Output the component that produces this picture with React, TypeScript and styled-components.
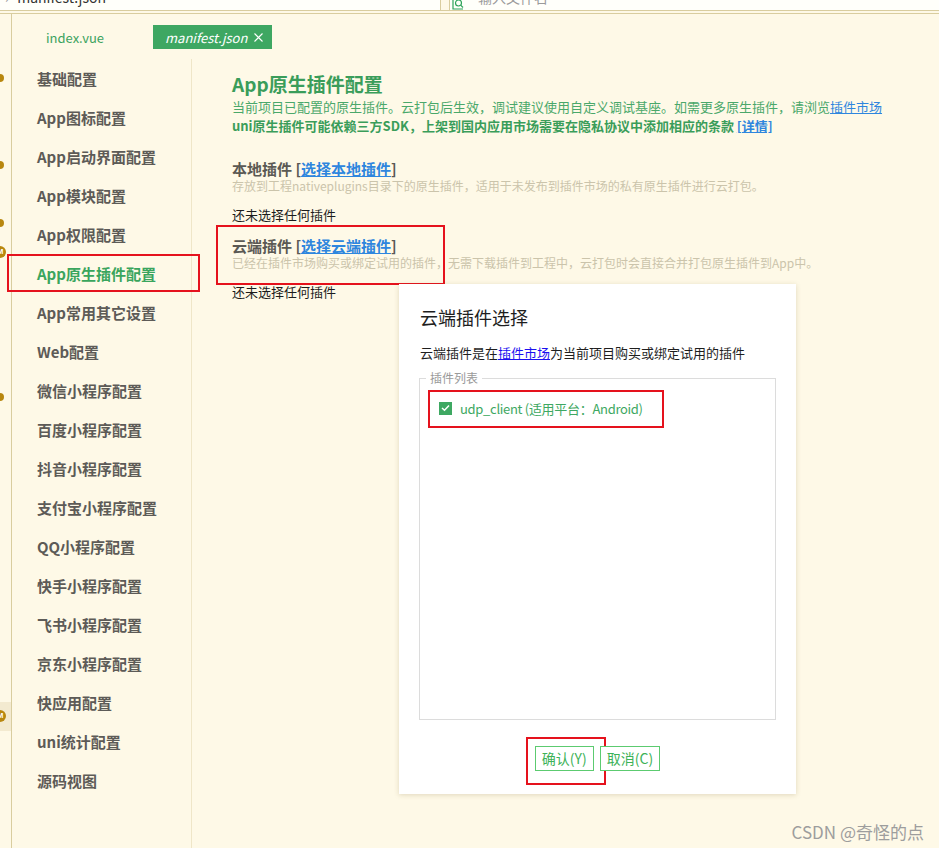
import React from 'react';
import styled, { createGlobalStyle, css } from 'styled-components';

const GlobalStyle = createGlobalStyle`
  html, body { margin: 0; padding: 0; }
  body {
    background: #fef9e7;
    font-family: "Noto Sans CJK SC", "Microsoft YaHei", sans-serif;
  }
  #root { width: 939px; height: 848px; overflow: hidden; }
`;

const RED = '#e5121d';
const TAN = '#d9cd9f';

const annotate = css<{ $l: number; $t: number; $w: number; $h: number }>`
  &::after {
    content: '';
    position: absolute;
    left: ${(p) => p.$l}px;
    top: ${(p) => p.$t}px;
    width: ${(p) => p.$w}px;
    height: ${(p) => p.$h}px;
    border: 2px solid ${RED};
    box-sizing: border-box;
    pointer-events: none;
  }
`;

const Page = styled.div`
  position: relative;
  width: 939px;
  height: 848px;
  display: flex;
  flex-direction: column;
  overflow: hidden;
`;

const TopStrip = styled.div`
  height: 10px;
  display: flex;
  border-bottom: 1px solid ${TAN};
  margin-bottom: 2px;
`;

const PathBox = styled.div`
  width: 441px;
  box-sizing: border-box;
  background: #fffffa;
  border-right: 1px solid ${TAN};
  display: flex;
  align-items: flex-start;
  gap: 8px;
  padding-left: 5px;
  overflow: hidden;
`;

const TopText = styled.span<{ $muted?: boolean }>`
  font-size: 14px;
  line-height: 20px;
  margin-top: -13px;
  color: ${(p) => (p.$muted ? '#9a9a9a' : '#333')};
  white-space: nowrap;
`;

const SearchBox = styled.div`
  flex: 1;
  margin-left: 8px;
  background: #fffffa;
  border-left: 1px solid ${TAN};
  display: flex;
  align-items: flex-start;
  gap: 14px;
  padding-left: 2px;
  overflow: hidden;
`;

const Body = styled.div`
  flex: 1;
  display: flex;
  border-top: 1px solid ${TAN};
  min-height: 0;
`;

const Gutter = styled.div`
  position: relative;
  width: 11px;
  border-right: 1px solid ${TAN};
  flex: none;
`;

const Marker = styled.span<{ $top: number }>`
  position: absolute;
  left: -4px;
  top: ${(p) => p.$top}px;
  width: 8px;
  height: 8px;
  border-radius: 50%;
  background: #b8870f;
`;

const Badge = styled.span<{ $top: number }>`
  position: absolute;
  left: -6px;
  top: ${(p) => p.$top}px;
  width: 12px;
  height: 12px;
  border-radius: 50%;
  background: #b8870f;
  color: #fff;
  font-size: 8px;
  line-height: 12px;
  text-align: center;
  font-family: "Liberation Sans", sans-serif;
  font-weight: bold;
`;

const GutterHighlight = styled.span<{ $top: number }>`
  position: absolute;
  left: 0;
  right: 0;
  top: ${(p) => p.$top}px;
  height: 29px;
  background: #f3ead0;
`;

const Editor = styled.div`
  flex: 1;
  display: flex;
  flex-direction: column;
  min-width: 0;
`;

const TabBar = styled.div`
  height: 46px;
  display: flex;
  align-items: center;
  gap: 49px;
  padding-left: 34px;
  flex: none;
`;

const Tab = styled.div<{ $active?: boolean }>`
  display: flex;
  align-items: center;
  gap: 7px;
  font-size: 13px;
  height: 24px;
  color: #3ca35f;
  ${(p) =>
    p.$active &&
    css`
      background: #3ea762;
      color: #fff;
      font-style: italic;
      padding: 0 9px 0 12px;
    `}
`;

const Content = styled.div`
  flex: 1;
  display: flex;
  min-height: 0;
`;

const Sidebar = styled.nav`
  width: 179px;
  border-right: 1px solid #efe6c8;
  flex: none;
  display: flex;
  flex-direction: column;
  margin-top: -1px;
`;

const NavItem = styled.div<{ $active?: boolean; $l: number; $t: number; $w: number; $h: number }>`
  position: relative;
  height: 39px;
  line-height: 39px;
  padding-left: 25px;
  font-size: 15px;
  font-weight: bold;
  color: ${(p) => (p.$active ? '#3aa55d' : '#5d5b57')};
  white-space: nowrap;
  ${(p) => p.$active && annotate}
`;

const Main = styled.main`
  flex: 1;
  padding: 11px 0 0 40px;
  min-width: 0;
`;

const Title = styled.h1`
  margin: 0;
  font-size: 19px;
  line-height: 26px;
  font-weight: bold;
  color: #3a9d5a;
`;

const Note = styled.div<{ $bold?: boolean }>`
  font-size: 13px;
  line-height: 19px;
  color: ${(p) => (p.$bold ? '#3a9d5a' : '#4aa86a')};
  font-weight: ${(p) => (p.$bold ? 'bold' : 'normal')};
  white-space: nowrap;
`;

const Link = styled.a`
  color: #2e86de;
  text-decoration: underline;
  font-weight: inherit;
  cursor: pointer;
`;

const Section = styled.section<{ $mt: number; $annot?: boolean; $l: number; $t: number; $w: number; $h: number }>`
  position: relative;
  margin-top: ${(p) => p.$mt}px;
  ${(p) => p.$annot && annotate}
`;

const SectionHead = styled.div`
  font-size: 15px;
  line-height: 19px;
  font-weight: bold;
  color: #5b5954;
  white-space: nowrap;
`;

const SectionDesc = styled.div`
  font-size: 12px;
  line-height: 16px;
  color: #cbc4ab;
  white-space: nowrap;
`;

const Empty = styled.div<{ $mt: number }>`
  margin-top: ${(p) => p.$mt}px;
  font-size: 13px;
  line-height: 20px;
  color: #1c1c1c;
`;

const Dialog = styled.div`
  position: absolute;
  left: 399px;
  top: 284px;
  width: 397px;
  height: 510px;
  box-sizing: border-box;
  padding: 21px 20px 0 20px;
  background: #fff;
  box-shadow: 0 1px 5px rgba(120, 100, 40, 0.22);
  display: flex;
  flex-direction: column;
`;

const DialogTitle = styled.h2`
  margin: 0;
  padding-left: 1px;
  font-size: 18px;
  line-height: 24px;
  font-weight: normal;
  color: #1e1e1e;
`;

const DialogText = styled.p`
  margin: 14px 0 0 0;
  padding-left: 1px;
  font-size: 13px;
  line-height: 20px;
  color: #1e1e1e;
`;

const BlueLink = styled.a`
  color: #1b0ff0;
  text-decoration: underline;
  cursor: pointer;
`;

const PluginSet = styled.fieldset`
  margin: 7px 0 0 0;
  padding: 0;
  border: 1px solid #dcdcdc;
  min-width: 0;
`;

const Legend = styled.legend`
  margin-left: 6px;
  padding: 0 4px;
  font-size: 12px;
  line-height: 16px;
  color: #9a9a9a;
`;

const PluginList = styled.div`
  height: 333px;
  box-sizing: border-box;
  padding: 12px 0 0 19px;
`;

const PluginItem = styled.label<{ $l: number; $t: number; $w: number; $h: number }>`
  position: relative;
  display: flex;
  align-items: center;
  gap: 8px;
  height: 20px;
  font-size: 13px;
  letter-spacing: -0.3px;
  color: #3ea862;
  ${annotate}
`;

const Check = styled.span`
  width: 13px;
  height: 13px;
  background: #3ea862;
  display: flex;
  align-items: center;
  justify-content: center;
  flex: none;
`;

const ButtonRow = styled.div`
  margin-top: 26px;
  display: flex;
  justify-content: center;
  gap: 6px;
`;

const Button = styled.button<{ $annot?: boolean; $l: number; $t: number; $w: number; $h: number }>`
  position: relative;
  height: 25px;
  padding: 0 6px;
  background: #fff;
  border: 1px solid #5ccb70;
  color: #3db257;
  font-family: inherit;
  font-size: 14px;
  line-height: 23px;
  cursor: pointer;
  ${(p) => p.$annot && annotate}
`;

const Watermark = styled.div`
  position: absolute;
  right: 15px;
  bottom: 6px;
  font-size: 17px;
  line-height: 20px;
  color: #9d9d9d;
  font-family: "Noto Sans CJK SC", sans-serif;
`;

const navItems = [
  '基础配置',
  'App图标配置',
  'App启动界面配置',
  'App模块配置',
  'App权限配置',
  'App原生插件配置',
  'App常用其它设置',
  'Web配置',
  '微信小程序配置',
  '百度小程序配置',
  '抖音小程序配置',
  '支付宝小程序配置',
  'QQ小程序配置',
  '快手小程序配置',
  '飞书小程序配置',
  '京东小程序配置',
  '快应用配置',
  'uni统计配置',
  '源码视图',
];

const dots = [60, 147, 205, 379];
const badges = [232, 696];

export default function App() {
  return (
    <Page>
      <GlobalStyle />
      <TopStrip>
        <PathBox>
          <TopText $muted>›</TopText>
          <TopText>manifest.json</TopText>
        </PathBox>
        <SearchBox>
          <svg width="12" height="10" viewBox="0 0 12 10" style={{ flex: 'none' }}>
            <path d="M1 0 V9 H11" fill="none" stroke="#2ea35a" strokeWidth="1.2" />
            <circle cx="6.5" cy="3" r="3" fill="none" stroke="#2ea35a" strokeWidth="1.2" />
            <path d="M8.7 5.2 L11 7.5" stroke="#2ea35a" strokeWidth="1.2" />
          </svg>
          <TopText $muted>输入文件名</TopText>
        </SearchBox>
      </TopStrip>
      <Body>
        <Gutter>
          <GutterHighlight $top={688} />
          {dots.map((t) => (
            <Marker key={t} $top={t} />
          ))}
          {badges.map((t) => (
            <Badge key={t} $top={t}>M</Badge>
          ))}
        </Gutter>
        <Editor>
          <TabBar>
            <Tab>index.vue</Tab>
            <Tab $active>
              manifest.json
              <svg width="9" height="9" viewBox="0 0 9 9">
                <path d="M0.5 0.5 L8.5 8.5 M8.5 0.5 L0.5 8.5" stroke="#fff" strokeWidth="1.1" />
              </svg>
            </Tab>
          </TabBar>
          <Content>
            <Sidebar>
              {navItems.map((n) => (
                <NavItem key={n} $active={n === 'App原生插件配置'} $l={-5} $t={0} $w={193} $h={38}>
                  {n}
                </NavItem>
              ))}
            </Sidebar>
            <Main>
              <Title>App原生插件配置</Title>
              <Note>
                当前项目已配置的原生插件。云打包后生效，调试建议使用自定义调试基座。如需更多原生插件，请浏览<Link>插件市场</Link>
              </Note>
              <Note $bold>
                uni原生插件可能依赖三方SDK，上架到国内应用市场需要在隐私协议中添加相应的条款 <Link>[详情]</Link>
              </Note>
              <Section $mt={24} $l={0} $t={0} $w={0} $h={0}>
                <SectionHead>
                  本地插件 [<Link>选择本地插件</Link>]
                </SectionHead>
                <SectionDesc>
                  存放到工程nativeplugins目录下的原生插件，适用于未发布到插件市场的私有原生插件进行云打包。
                </SectionDesc>
              </Section>
              <Empty $mt={11}>还未选择任何插件</Empty>
              <Section $mt={11} $annot $l={-16} $t={-11} $w={229} $h={60}>
                <SectionHead>
                  云端插件 [<Link>选择云端插件</Link>]
                </SectionHead>
                <SectionDesc>
                  已经在插件市场购买或绑定试用的插件，无需下载插件到工程中，云打包时会直接合并打包原生插件到App中。
                </SectionDesc>
              </Section>
              <Empty $mt={11}>还未选择任何插件</Empty>
            </Main>
          </Content>
        </Editor>
      </Body>

      <Dialog>
        <DialogTitle>云端插件选择</DialogTitle>
        <DialogText>
          云端插件是在<BlueLink>插件市场</BlueLink>为当前项目购买或绑定试用的插件
        </DialogText>
        <PluginSet>
          <Legend>插件列表</Legend>
          <PluginList>
            <PluginItem $l={-11} $t={-8} $w={236} $h={38}>
              <Check>
                <svg width="9" height="8" viewBox="0 0 9 8">
                  <path d="M1 4 L3.5 6.3 L8 1.5" fill="none" stroke="#fff" strokeWidth="1.5" />
                </svg>
              </Check>
              udp_client (适用平台：Android)
            </PluginItem>
          </PluginList>
        </PluginSet>
        <ButtonRow>
          <Button $annot $l={-10} $t={-10} $w={80} $h={48}>确认(Y)</Button>
          <Button $l={0} $t={0} $w={0} $h={0}>取消(C)</Button>
        </ButtonRow>
      </Dialog>

      <Watermark>CSDN @奇怪的点</Watermark>
    </Page>
  );
}
